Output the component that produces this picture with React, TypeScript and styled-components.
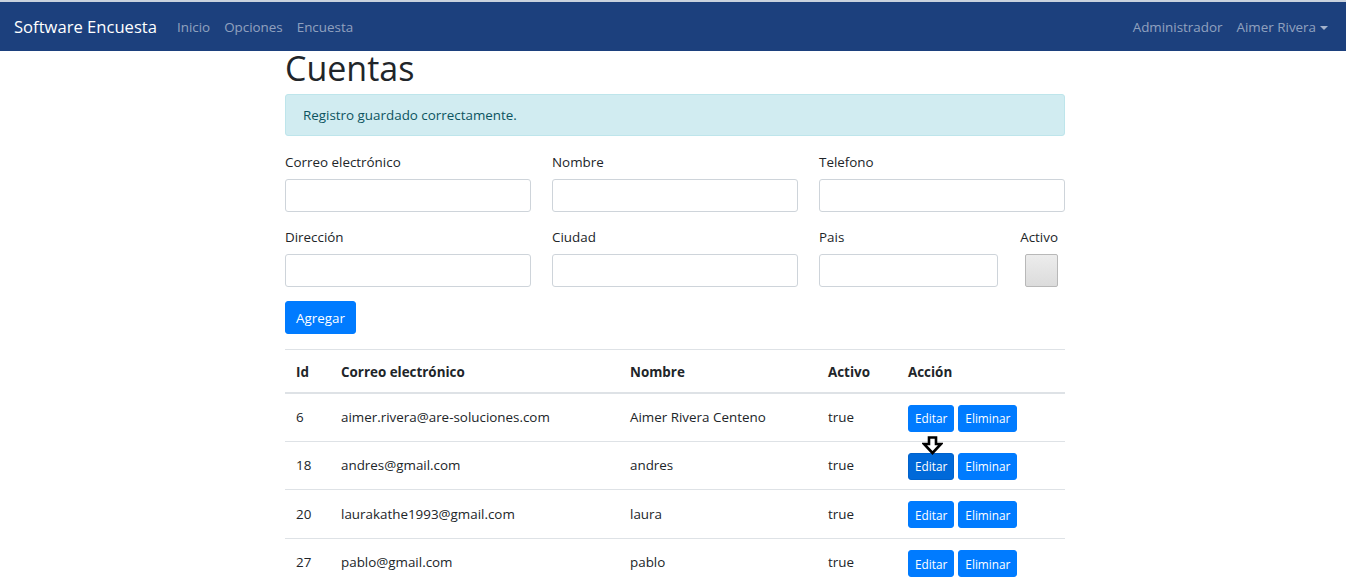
import React from "react";
import styled, { createGlobalStyle } from "styled-components";

const Global = createGlobalStyle`
  html, body { margin: 0; padding: 0; background: #fff; }
  body {
    font-family: "Open Sans", "Noto Sans", "Liberation Sans", sans-serif;
    font-size: 13.4px;
    color: #212529;
    line-height: 1.5;
  }
  * { box-sizing: border-box; }
`;

const NavBar = styled.nav`
  height: 51px;
  border-top: 2px solid #c9d2de;
  background: #1c407d;
  display: flex;
  align-items: center;
  padding: 1px 11px 0 14px;
`;

const Brand = styled.span`
  color: #fff;
  font-size: 16.6px;
  margin-right: 13px;
`;

const NavLink = styled.span`
  color: rgba(255, 255, 255, 0.52);
  font-size: 13.4px;
  padding: 0 7px;
`;

const NavLeft = styled.div`
  display: flex;
  align-items: center;
  flex: 1;
`;

const NavRight = styled.div`
  display: flex;
  align-items: center;
`;

const Caret = styled.span`
  display: inline-block;
  width: 0;
  height: 0;
  margin-left: 4px;
  vertical-align: 2px;
  border-left: 4px solid transparent;
  border-right: 4px solid transparent;
  border-top: 4px solid rgba(255, 255, 255, 0.6);
`;

const Container = styled.main`
  width: 780px;
  margin: 0 0 0 calc((100% - 776px) / 2);
`;

const Title = styled.h1`
  margin: -3px 0 0 0;
  font-size: 34px;
  font-weight: 500;
  line-height: 40px;
  color: #212529;
  padding-bottom: 6px;
`;

const Alert = styled.div`
  height: 42px;
  display: flex;
  align-items: center;
  padding: 0 17px;
  background: #d1ecf1;
  border: 1px solid #bee5eb;
  border-radius: 3px;
  color: #0c5460;
  margin-bottom: 16px;
`;

const FormRow = styled.div`
  display: flex;
  gap: 21px;
  margin-bottom: 15px;
`;

const Field = styled.div<{ $w?: number }>`
  display: flex;
  flex-direction: column;
  width: ${(p) => (p.$w ? `${p.$w}px` : "246px")};
`;

const CheckField = styled.div`
  flex: 1;
  display: flex;
  flex-direction: column;
  align-items: flex-end;
  padding-right: 7px;
`;

const Label = styled.label`
  line-height: 20px;
  height: 20px;
  margin-bottom: 7px;
  color: #212529;
`;

const Input = styled.div`
  height: 33px;
  border: 1px solid #ced4da;
  border-radius: 3px;
  background: #fff;
`;

const CheckBox = styled.div`
  width: 33px;
  height: 33px;
  border: 1px solid #b8b8b8;
  border-radius: 2px;
  background: linear-gradient(#ececec, #dcdcdc);
`;

const PrimaryButton = styled.button`
  font-family: inherit;
  font-size: 13.4px;
  color: #fff;
  background: #007bff;
  border: 1px solid #007bff;
  border-radius: 3px;
  height: 33px;
  padding: 0 10px;
  margin: -1px 0 15px 0;
  display: block;
`;

const Table = styled.table`
  width: 100%;
  border-collapse: collapse;
  table-layout: fixed;
`;

const Th = styled.th<{ $w?: number }>`
  text-align: left;
  font-weight: 700;
  height: 43px;
  padding: 2px 11px 0;
  border-top: 1px solid #dee2e6;
  border-bottom: 2px solid #dee2e6;
  width: ${(p) => (p.$w ? `${p.$w}px` : "auto")};
`;

const Td = styled.td`
  height: 48.5px;
  padding: 0 11px;
  border-top: 1px solid #dee2e6;
  vertical-align: middle;
`;

const ActionCell = styled.div`
  display: flex;
  gap: 4px;
  padding-top: 2px;
`;

const SmallButton = styled.button<{ $active?: boolean }>`
  font-family: inherit;
  font-size: 11.8px;
  color: #fff;
  background: ${(p) => (p.$active ? "#0069d9" : "#007bff")};
  border: 1px solid ${(p) => (p.$active ? "#0062cc" : "#007bff")};
  border-radius: 3px;
  height: 27px;
  padding: 0 6px;
`;

const CursorMark = styled.svg`
  position: absolute;
  left: 922px;
  top: 436px;
`;

const rows = [
  { id: 6, email: "aimer.rivera@are-soluciones.com", name: "Aimer Rivera Centeno", active: "true" },
  { id: 18, email: "andres@gmail.com", name: "andres", active: "true" },
  { id: 20, email: "laurakathe1993@gmail.com", name: "laura", active: "true" },
  { id: 27, email: "pablo@gmail.com", name: "pablo", active: "true" },
];

export default function App() {
  return (
    <>
      <Global />
      <NavBar>
        <NavLeft>
          <Brand>Software Encuesta</Brand>
          <NavLink>Inicio</NavLink>
          <NavLink>Opciones</NavLink>
          <NavLink>Encuesta</NavLink>
        </NavLeft>
        <NavRight>
          <NavLink>Administrador</NavLink>
          <NavLink>
            Aimer Rivera<Caret />
          </NavLink>
        </NavRight>
      </NavBar>
      <Container>
        <Title>Cuentas</Title>
        <Alert>Registro guardado correctamente.</Alert>
        <FormRow>
          <Field>
            <Label>Correo electrónico</Label>
            <Input />
          </Field>
          <Field>
            <Label>Nombre</Label>
            <Input />
          </Field>
          <Field>
            <Label>Telefono</Label>
            <Input />
          </Field>
        </FormRow>
        <FormRow>
          <Field>
            <Label>Dirección</Label>
            <Input />
          </Field>
          <Field>
            <Label>Ciudad</Label>
            <Input />
          </Field>
          <Field $w={179}>
            <Label>Pais</Label>
            <Input />
          </Field>
          <CheckField>
            <Label>Activo</Label>
            <CheckBox />
          </CheckField>
        </FormRow>
        <PrimaryButton>Agregar</PrimaryButton>
        <Table>
          <thead>
            <tr>
              <Th $w={45}>Id</Th>
              <Th $w={289}>Correo electrónico</Th>
              <Th $w={198}>Nombre</Th>
              <Th $w={80}>Activo</Th>
              <Th>Acción</Th>
            </tr>
          </thead>
          <tbody>
            {rows.map((r) => (
              <tr key={r.id}>
                <Td>{r.id}</Td>
                <Td>{r.email}</Td>
                <Td>{r.name}</Td>
                <Td>{r.active}</Td>
                <Td>
                  <ActionCell>
                    <SmallButton $active={r.id === 18}>Editar</SmallButton>
                    <SmallButton>Eliminar</SmallButton>
                  </ActionCell>
                </Td>
              </tr>
            ))}
          </tbody>
        </Table>
      </Container>
      <CursorMark width="21" height="19" viewBox="0 0 21 19">
        <path
          d="M7 1.5 H14 V8 H19 L10.5 17 L2 8 H7 Z"
          fill="#fff"
          stroke="#000"
          strokeWidth="2.6"
          strokeLinejoin="miter"
        />
      </CursorMark>
    </>
  );
}
